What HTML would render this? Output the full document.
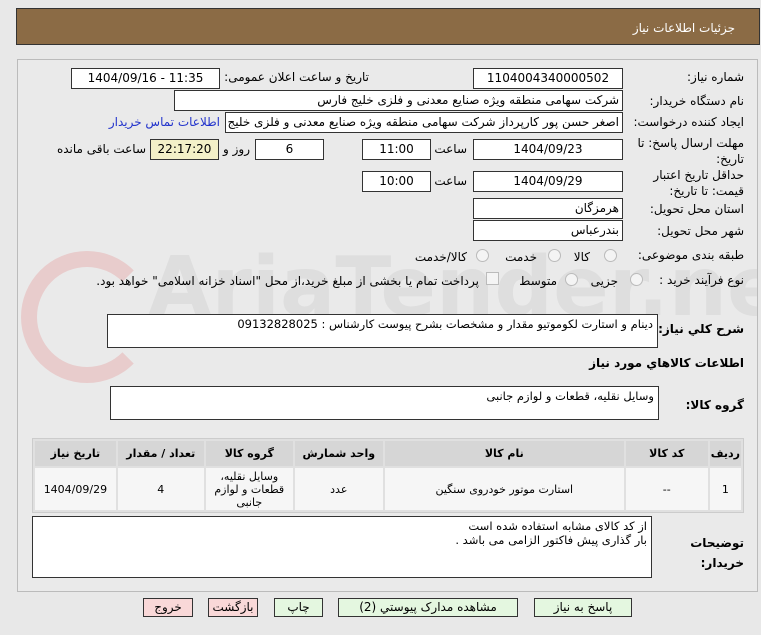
<!DOCTYPE html>
<html><head><meta charset="utf-8"><style>
body{margin:0;width:761px;height:635px;background:#e8e8e8;font-family:"DejaVu Sans","Liberation Sans",sans-serif;font-size:11px;color:#000;position:relative;overflow:hidden}
.a{position:absolute;white-space:nowrap}
.hdr{left:16px;top:8px;width:742px;height:35px;background:#8b6b45;border:1px solid #333}
.box{position:absolute;background:#fff;border:1px solid #333;box-sizing:border-box;height:21px;line-height:19px;text-align:center;font-size:12px}
.l{position:absolute;white-space:nowrap;direction:rtl;text-align:right}
.ta{position:absolute;background:#fff;border:1px solid #333;box-sizing:border-box;direction:rtl;text-align:right;padding:2px 4px;font-size:11.5px}
table{position:absolute;border-collapse:separate;border-spacing:2px;background:#e0e0e0;border:1px solid #ccc}
th{background:#d6d6d6;height:23px;font-weight:bold;font-size:11px}
td{background:#f6f6f6;text-align:center;font-size:11px}
.btn{position:absolute;top:598px;height:19px;border:1px solid #333;box-sizing:border-box;text-align:center;line-height:17px;font-size:12px;background:#e4f7e0}
.r{background:#f9d8d8}
.rad{position:absolute;width:11px;height:11px;border:1px solid #bbb;border-radius:50%;background:#f4f4f4}
</style></head><body>
<div class="a hdr"></div>
<div class="l" style="right:26px;top:21px;color:#fff;font-size:12px">جزئیات اطلاعات نیاز</div>
<div class="a" style="left:17px;top:59px;width:739px;height:531px;border:1px solid #bbb;background:#eaeaea;overflow:hidden">
<div class="a" style="left:3px;top:191px;width:100px;height:100px;border:16px solid #e8cccc;border-radius:50%;border-right-color:transparent"></div>
<div class="a" style="left:130px;top:180px;font-size:82px;font-weight:bold;color:#dedede">AriaTender.net</div>
</div>

<div class="l" style="right:17px;top:70px;font-size:12px">شماره نیاز:</div>
<div class="box" style="left:473px;top:68px;width:150px">1104004340000502</div>
<div class="l" style="right:392px;top:70px;font-size:12px">تاریخ و ساعت اعلان عمومی:</div>
<div class="box" style="left:71px;top:68px;width:149px">1404/09/16 - 11:35</div>

<div class="l" style="right:17px;top:94px;font-size:12px">نام دستگاه خریدار:</div>
<div class="box" style="left:174px;top:90px;width:449px;text-align:right;padding-right:3px;direction:rtl">شرکت سهامی منطقه ویژه صنایع معدنی و فلزی خلیج فارس</div>

<div class="l" style="right:17px;top:115px;font-size:12px">ایجاد کننده درخواست:</div>
<div class="box" style="left:225px;top:112px;width:398px;text-align:right;padding-right:3px;direction:rtl;overflow:hidden">اصغر حسن پور کارپرداز شرکت سهامی منطقه ویژه صنایع معدنی و فلزی خلیج فارس</div>
<div class="l" style="right:541px;top:115px;color:#2233cc;font-size:12px">اطلاعات تماس خریدار</div>

<div class="l" style="right:17px;top:135px;font-size:12px;line-height:16px">مهلت ارسال پاسخ: تا<br>تاریخ:</div>
<div class="box" style="left:473px;top:139px;width:150px">1404/09/23</div>
<div class="l" style="right:294px;top:142px;font-size:12px">ساعت</div>
<div class="box" style="left:362px;top:139px;width:69px">11:00</div>
<div class="box" style="left:255px;top:139px;width:69px">6</div>
<div class="l" style="right:511px;top:142px;font-size:12px">روز و</div>
<div class="box" style="left:150px;top:139px;width:69px;background:#f3f0c8">22:17:20</div>
<div class="l" style="right:615px;top:142px;font-size:12px">ساعت باقی مانده</div>

<div class="l" style="right:17px;top:167px;font-size:12px;line-height:16px">حداقل تاریخ اعتبار<br>قیمت: تا تاریخ:</div>
<div class="box" style="left:473px;top:171px;width:150px">1404/09/29</div>
<div class="l" style="right:294px;top:174px;font-size:12px">ساعت</div>
<div class="box" style="left:362px;top:171px;width:69px">10:00</div>

<div class="l" style="right:17px;top:202px;font-size:12px">استان محل تحویل:</div>
<div class="box" style="left:473px;top:198px;width:150px;text-align:right;padding-right:3px">هرمزگان</div>
<div class="l" style="right:17px;top:224px;font-size:12px">شهر محل تحویل:</div>
<div class="box" style="left:473px;top:220px;width:150px;text-align:right;padding-right:3px">بندرعباس</div>

<div class="l" style="right:17px;top:248px;font-size:12px">طبقه بندی موضوعی:</div>
<div class="rad" style="left:604px;top:249px"></div><div class="l" style="right:171px;top:250px;font-size:12px">کالا</div>
<div class="rad" style="left:548px;top:249px"></div><div class="l" style="right:224px;top:250px;font-size:12px">خدمت</div>
<div class="rad" style="left:476px;top:249px"></div><div class="l" style="right:294px;top:250px;font-size:12px">کالا/خدمت</div>

<div class="l" style="right:17px;top:273px;font-size:12px">نوع فرآیند خرید :</div>
<div class="rad" style="left:630px;top:273px"></div><div class="l" style="right:143px;top:274px;font-size:12px">جزیی</div>
<div class="rad" style="left:565px;top:273px"></div><div class="l" style="right:204px;top:274px;font-size:12px">متوسط</div>
<div class="a" style="left:486px;top:272px;width:11px;height:11px;border:1px solid #bbb;background:#f4f4f4"></div>
<div class="l" style="right:282px;top:274px;font-size:12px">پرداخت تمام یا بخشی از مبلغ خرید،از محل "اسناد خزانه اسلامی" خواهد بود.</div>

<div class="l" style="right:17px;top:322px;font-size:12px;font-weight:bold">شرح کلي نياز:</div>
<div class="ta" style="left:107px;top:314px;width:551px;height:34px">دینام و استارت لکوموتیو  مقدار و مشخصات بشرح پیوست  کارشناس : 09132828025</div>
<div class="l" style="right:17px;top:356px;font-size:12px;font-weight:bold">اطلاعات کالاهاي مورد نياز</div>
<div class="l" style="right:17px;top:398px;font-size:12px;font-weight:bold">گروه کالا:</div>
<div class="ta" style="left:110px;top:386px;width:549px;height:34px">وسایل نقلیه، قطعات و لوازم جانبی</div>

<table style="left:32px;top:438px;width:712px;direction:rtl">
<tr><th style="width:25px">ردیف</th><th style="width:80px">کد کالا</th><th style="width:237px">نام کالا</th><th style="width:86px">واحد شمارش</th><th style="width:85px">گروه کالا</th><th style="width:84px">تعداد / مقدار</th><th>تاریخ نیاز</th></tr>
<tr style="height:42px"><td>1</td><td>--</td><td>استارت موتور خودروی سنگین</td><td>عدد</td><td style="line-height:13px">وسایل نقلیه، قطعات و لوازم جانبی</td><td>4</td><td>1404/09/29</td></tr>
</table>

<div class="l" style="right:17px;top:533px;font-size:12px;font-weight:bold;line-height:20px">توضیحات<br>خریدار:</div>
<div class="ta" style="left:32px;top:516px;width:620px;height:62px;line-height:14px">از کد کالای مشابه استفاده شده است<br>بار گذاری پیش فاکتور الزامی می باشد .</div>

<div class="btn" style="left:534px;width:98px">پاسخ به نیاز</div>
<div class="btn" style="left:338px;width:180px">مشاهده مدارک پیوستي (2)</div>
<div class="btn" style="left:274px;width:49px">چاپ</div>
<div class="btn r" style="left:208px;width:50px">بازگشت</div>
<div class="btn r" style="left:143px;width:50px">خروج</div>
</body></html>
